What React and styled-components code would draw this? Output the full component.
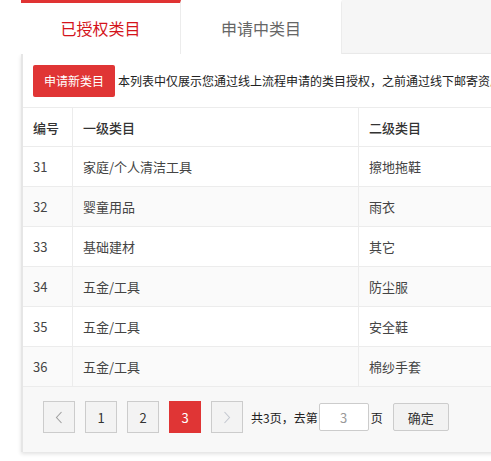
import styled, { createGlobalStyle } from "styled-components";

const rows = [
  { id: 31, first: "家庭/个人清洁工具", second: "擦地拖鞋" },
  { id: 32, first: "婴童用品", second: "雨衣" },
  { id: 33, first: "基础建材", second: "其它" },
  { id: 34, first: "五金/工具", second: "防尘服" },
  { id: 35, first: "五金/工具", second: "安全鞋" },
  { id: 36, first: "五金/工具", second: "棉纱手套" },
];

const GlobalStyle = createGlobalStyle`
  html, body {
    margin: 0;
    padding: 0;
    background: #fff;
    overflow: hidden;
  }
  body {
    font-family: "Noto Sans CJK SC", "Noto Sans", sans-serif;
    color: #333;
  }
`;

export default function App() {
  return (
    <>
      <GlobalStyle />
      <Page>
        <TabBar>
          <Tab active>已授权类目</Tab>
          <Tab>申请中类目</Tab>
          <TabFill />
        </TabBar>
        <Panel>
          <Toolbar>
            <PrimaryButton>申请新类目</PrimaryButton>
            <Notice>
              本列表中仅展示您通过线上流程申请的类目授权，之前通过线下邮寄资质的类目授权请联系小二查询
            </Notice>
          </Toolbar>
          <HeadRow>
            <Cell>编号</Cell>
            <Cell>一级类目</Cell>
            <Cell>二级类目</Cell>
          </HeadRow>
          {rows.map((r, i) => (
            <Row key={r.id} striped={i % 2 === 1}>
              <Cell>{r.id}</Cell>
              <Cell>{r.first}</Cell>
              <Cell>{r.second}</Cell>
            </Row>
          ))}
          <Pager>
            <PageBtn>
              <svg width="8" height="13" viewBox="0 0 8 13">
                <polyline points="6.5,1 1.5,6.5 6.5,12" fill="none" stroke="#a0a0a0" strokeWidth="1.1" />
              </svg>
            </PageBtn>
            <PageBtn>1</PageBtn>
            <PageBtn>2</PageBtn>
            <PageBtn current>3</PageBtn>
            <PageBtn>
              <svg width="8" height="13" viewBox="0 0 8 13">
                <polyline points="1.5,1 6.5,6.5 1.5,12" fill="none" stroke="#c4c8d0" strokeWidth="1.1" />
              </svg>
            </PageBtn>
            <Jump>
              <PagerText>共3页，去第</PagerText>
              <JumpInput defaultValue="3" />
              <PagerText>页</PagerText>
              <ConfirmButton>确定</ConfirmButton>
            </Jump>
          </Pager>
        </Panel>
      </Page>
    </>
  );
}

const Page = styled.div`
  width: 720px;
  padding-left: 21px;
  padding-bottom: 9px;
`;

const TabBar = styled.div`
  display: flex;
  height: 53px;
  background: #f6f6f6;
  border-bottom: 1px solid #ececec;
`;

const Tab = styled.div`
  box-sizing: border-box;
  width: ${(p) => (p.active ? "160px" : "161px")};
  height: 54px;
  display: flex;
  align-items: center;
  justify-content: center;
  padding-bottom: 2px;
  background: #fff;
  border-top: 3px solid ${(p) => (p.active ? "#e03333" : "#fff")};
  border-right: 1px solid #ececec;
  font-size: 16px;
  color: ${(p) => (p.active ? "#d4141b" : "#666")};
`;

const TabFill = styled.div`
  flex: 1;
`;

const Panel = styled.div`
  width: 660px;
  background: #fff;
  border-left: 2px solid #e6e6e6;
  box-shadow: 0 2px 4px rgba(0, 0, 0, 0.12);
`;

const Toolbar = styled.div`
  display: flex;
  align-items: center;
  height: 53px;
  padding-left: 10px;
`;

const PrimaryButton = styled.button`
  height: 32px;
  width: 82px;
  padding: 0;
  border: none;
  border-radius: 2px;
  background: #e03535;
  color: #fff;
  font-family: inherit;
  font-size: 12px;
  flex-shrink: 0;
`;

const Notice = styled.span`
  margin-left: 3px;
  font-size: 12px;
  color: #222;
  white-space: nowrap;
`;

const Row = styled.div`
  box-sizing: border-box;
  display: grid;
  grid-template-columns: 50px 286px 1fr;
  height: 40px;
  border-top: 1px solid #ececec;
  background: ${(p) => (p.striped ? "#fafafa" : "#fff")};
  font-size: 13px;
  color: #444;
`;

const HeadRow = styled(Row)`
  height: 39px;
  color: #333;
  font-weight: 500;
`;

const Cell = styled.div`
  display: flex;
  align-items: center;
  padding-left: 10px;
  border-right: 1px solid #ececec;
  white-space: nowrap;
`;

const Pager = styled.div`
  box-sizing: border-box;
  display: flex;
  align-items: flex-start;
  gap: 10px;
  height: 66px;
  padding: 14px 0 0 20px;
  background: #f8f8f8;
  border-top: 1px solid #ececec;
`;

const PageBtn = styled.div`
  box-sizing: border-box;
  width: 32px;
  height: 32px;
  display: flex;
  align-items: center;
  justify-content: center;
  font-size: 13px;
  background: ${(p) => (p.current ? "#e03535" : "#f3f3f3")};
  border: 1px solid ${(p) => (p.current ? "#e03535" : "#cccccc")};
  color: ${(p) => (p.current ? "#fff" : "#333")};
`;

const Jump = styled.div`
  display: flex;
  align-items: center;
  height: 32px;
  margin-left: -2px;
`;

const PagerText = styled.span`
  font-size: 12px;
  color: #222;
  margin-right: 1px;
`;

const JumpInput = styled.input`
  box-sizing: border-box;
  width: 50px;
  height: 28px;
  margin-right: 2px;
  border: 1px solid #ccc;
  border-radius: 2px;
  background: #fff;
  text-align: center;
  font-family: inherit;
  font-size: 13px;
  color: #999;
  outline: none;
`;

const ConfirmButton = styled.button`
  box-sizing: border-box;
  width: 56px;
  height: 28px;
  margin-left: 9px;
  border: 1px solid #ccc;
  border-radius: 2px;
  background: #f2f2f2;
  font-family: inherit;
  font-size: 13px;
  color: #333;
`;
